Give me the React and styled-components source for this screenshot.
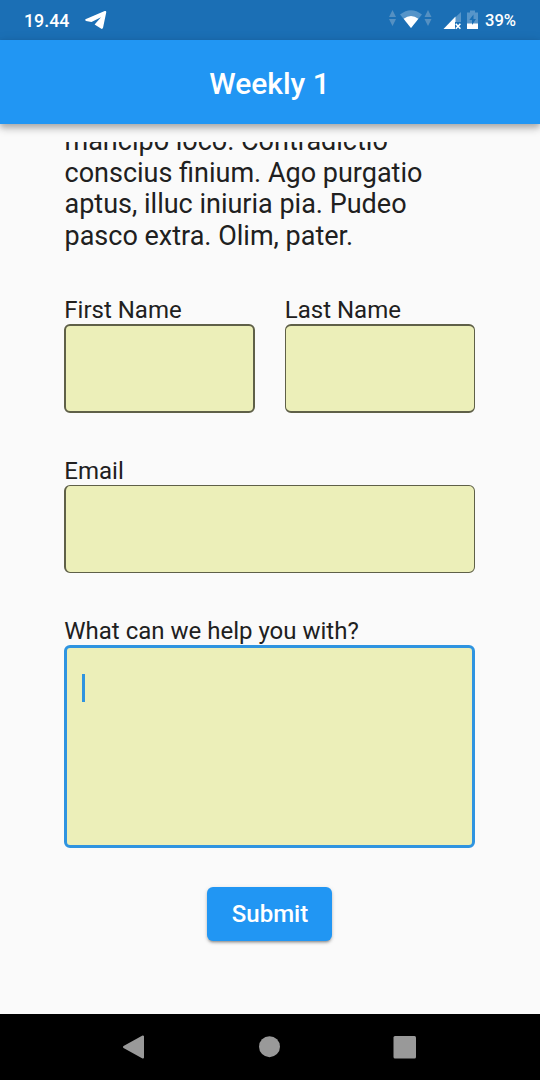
import React from "react";
import styled, { createGlobalStyle } from "styled-components";

const GlobalStyle = createGlobalStyle`
  * { box-sizing: border-box; }
  body { margin: 0; background: #fafafa; font-family: Roboto, sans-serif; color: #202020; }
`;

const Screen = styled.div`
  width: 540px;
  height: 1080px;
  display: flex;
  flex-direction: column;
  overflow: hidden;
  background: #fafafa;
`;

const StatusBar = styled.header`
  flex: none;
  height: 40px;
  padding: 0 24px;
  display: flex;
  align-items: center;
  background: #1b6fb5;
  color: #fff;
  font-weight: 500;
`;

const Clock = styled.span`
  width: 61px;
  font-size: 17.8px;
  line-height: 40px;
  padding-top: 2px;
`;

const StatusIcons = styled.div`
  display: flex;
  margin-left: auto;
  margin-right: 2px;
`;

const Battery = styled.span`
  font-size: 16.6px;
  width: 31px;
  line-height: 40px;
  padding-top: 1px;
  white-space: nowrap;
`;

const AppBar = styled.div`
  flex: none;
  height: 84px;
  display: flex;
  align-items: center;
  justify-content: center;
  background: #2196f3;
  color: #fff;
  box-shadow: 0 3px 6px rgba(0, 0, 0, 0.22), 0 6px 8px rgba(0, 0, 0, 0.1), 0 1px 12px rgba(0, 0, 0, 0.08);
`;

const Title = styled.h1`
  margin: 3px 1px 0 0;
  font-size: 30px;
  font-weight: 500;
  line-height: 35px;
`;

const ScrollArea = styled.main`
  flex: 1;
  min-height: 0;
  margin-top: 18px;
  padding: 0 65px 0 64px;
  overflow: hidden;
  display: flex;
  flex-direction: column;
`;

const Intro = styled.p`
  flex: none;
  height: 126px;
  margin: -16px 0 44px;
  padding-left: 0.5px;
  font-size: 27px;
  line-height: 31.5px;
  white-space: nowrap;
`;

const FieldRow = styled.div`
  flex: none;
  display: flex;
  gap: 30px;
  margin-bottom: ${(p) => p.$gap}px;
`;

const Field = styled.div`
  flex: 1;
  display: flex;
  flex-direction: column;
`;

const Label = styled.label`
  height: 28px;
  padding-left: 0.3px;
  font-size: 24px;
  line-height: 28px;
  white-space: nowrap;
`;

const InputBox = styled.div`
  height: ${(p) => p.$height}px;
  border: solid ${(p) => (p.$focused ? "#2f94e0" : "#5f6048")};
  border-width: ${(p) => p.$border};
  border-radius: 6px;
  background: #ecefb9;
  padding: ${(p) => (p.$focused ? "26px 15px" : "0")};
`;

const Caret = styled.div`
  width: 3px;
  height: 28px;
  background: #2f94e0;
`;

const SubmitButton = styled.button`
  flex: none;
  align-self: center;
  width: 125px;
  height: 54px;
  padding: 0 0 0 1px;
  border: 0;
  border-radius: 6px;
  background: #2196f3;
  color: #fff;
  font: 500 24px/28px Roboto, sans-serif;
  box-shadow: 0 3px 2px -2px rgba(0, 0, 0, 0.2), 0 2px 3px rgba(0, 0, 0, 0.2), 0 1px 5px rgba(0, 0, 0, 0.1);
`;

const NavBar = styled.nav`
  flex: none;
  height: 66px;
  background: #000;
  display: flex;
  justify-content: space-between;
  align-items: center;
  padding: 0 124px 0 122px;
`;

const TelegramIcon = () => (
  <svg width="22" height="20" viewBox="85 11 22 20" fill="#fff">
    <path d="M104.700 12.100Q106.500 11.600 106.200 13.400L103.100 28.600Q102.500 30.500 100.900 29.600L94.600 25.500L101 18.300L91.500 23.100L86 21.900Q84.200 20.800 86 19.900Z" />
  </svg>
);

const ConnectivityIcons = () => (
  <svg width="95" height="24" viewBox="388 8 95 24">
    <g fill="#5590c2">
      <path d="M389 17l3.500-7 3.500 7zM389 19h7l-3.500 7zM424.500 17l3.500-7 3.500 7zM424.500 19h7l-3.500 7z" />
    </g>
    <path d="M400 14.500Q411 6 422 14.500L411 28Z" fill="#5795c9" />
    <path d="M403.600 18.800Q411 13.200 418.400 18.800L411 28Z" fill="#fff" />
    <path d="M461 12V22H453V19.500Z" fill="#5795c9" />
    <path d="M443.500 29L455.500 16.500V29Z" fill="#fff" />
    <path d="M455 22h6v7h-6Z" fill="#1b6fb5" />
    <path d="M455.800 23.800l4.600 4.900m0-4.900l-4.600 4.900" stroke="#fff" strokeWidth="1.600" />
    <path d="M467 12.500h3V10.500h5v2h3V29H467Z" fill="#5795c9" />
    <path d="M467 23.500h11v5.500H467Z" fill="#fff" />
    <path d="M473.500 14.500l-4.200 5.500h2.700v5l4-6h-2.500Z" fill="#1b6fb5" />
  </svg>
);

const BackIcon = () => (
  <svg width="22" height="24" viewBox="0 0 22 24">
    <path d="M2 12L21 1.500V22.500Z" fill="#999" stroke="#999" strokeWidth="2" strokeLinejoin="round" />
  </svg>
);

const HomeIcon = () => (
  <svg width="22" height="22" viewBox="0 0 22 22">
    <circle cx="11.500" cy="10.700" r="10.500" fill="#999" />
  </svg>
);

const RecentsIcon = () => (
  <svg width="23" height="23" viewBox="0 0 23 23">
    <rect x="0.500" y="0" width="22.500" height="22.500" rx="1.500" fill="#999" />
  </svg>
);

export default function App() {
  return (
    <Screen>
      <GlobalStyle />
      <StatusBar>
        <Clock>19.44</Clock>
        <TelegramIcon />
        <StatusIcons>
          <ConnectivityIcons />
        </StatusIcons>
        <Battery>39%</Battery>
      </StatusBar>
      <AppBar>
        <Title>Weekly 1</Title>
      </AppBar>
      <ScrollArea>
        <Intro>
          mancipo loco. Contradictio<br />
          conscius finium. Ago purgatio<br />
          aptus, illuc iniuria pia. Pudeo<br />
          pasco extra. Olim, pater.
        </Intro>
        <FieldRow $gap={44}>
          <Field>
            <Label>First Name</Label>
            <InputBox $height={89} $border="2px" />
          </Field>
          <Field>
            <Label>Last Name</Label>
            <InputBox $height={89} $border="2px 1px" />
          </Field>
        </FieldRow>
        <FieldRow $gap={44}>
          <Field>
            <Label>Email</Label>
            <InputBox $height={88} $border="1px 1px 1px 2px" />
          </Field>
        </FieldRow>
        <FieldRow $gap={39}>
          <Field>
            <Label>What can we help you with?</Label>
            <InputBox $height={203} $border="3px" $focused>
              <Caret />
            </InputBox>
          </Field>
        </FieldRow>
        <SubmitButton>Submit</SubmitButton>
      </ScrollArea>
      <NavBar>
        <BackIcon />
        <HomeIcon />
        <RecentsIcon />
      </NavBar>
    </Screen>
  );
}
